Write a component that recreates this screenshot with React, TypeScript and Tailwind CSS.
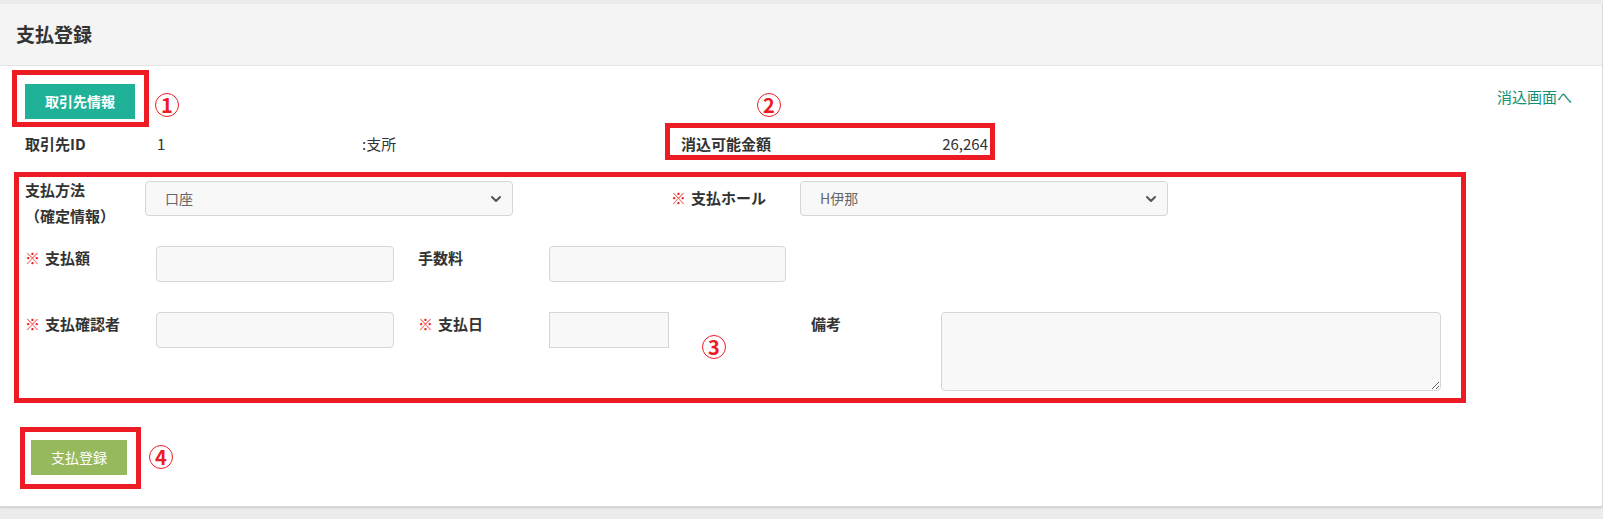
import { ChevronDown } from "lucide-react";

const font = { fontFamily: '"Noto Sans CJK JP", "Noto Sans", sans-serif' };

function Mark({ n, className }: { n: string; className: string }) {
  return (
    <span
      className={`absolute flex h-[24px] w-[24px] items-center justify-center rounded-full border border-[#ed1c24] bg-white text-[20px] font-bold leading-none text-[#ed1c24] ${className}`}
    >
      {n}
    </span>
  );
}

function Req() {
  return <span className="mr-[5px] font-normal text-[#ed1c24]">※</span>;
}

function FakeSelect({ value }: { value: string }) {
  return (
    <div className="flex h-[35px] w-[368px] items-center justify-between rounded-[4px] border border-[#d6d6d6] bg-[#f8f8f8] pl-[19px] pr-[8px] text-[14px] text-[#666]">
      <span>{value}</span>
      <ChevronDown size={16} strokeWidth={3} className="text-[#555]" />
    </div>
  );
}

export default function App() {
  return (
    <div className="relative min-h-[519px] w-full bg-[#ececec] pt-[4px] text-[#333]" style={font}>
      <div className="border-r border-b border-[#d8d8d8] bg-white shadow-[0_1px_2px_rgba(0,0,0,0.12)]">
        {/* header */}
        <div className="flex h-[62px] items-center border-b border-[#e3e3e3] bg-[#f4f4f4] pl-[16px]">
          <h1 className="text-[19px] font-bold">支払登録</h1>
        </div>

        {/* top row */}
        <div className="flex items-start justify-between pl-[25px] pr-[30px] pt-[18px]">
          <button className="h-[35px] w-[110px] bg-[#1fb299] text-[14px] font-bold text-white">
            取引先情報
          </button>
          <a className="mt-[3px] text-[15px] leading-[20px] text-[#138f72]">消込画面へ</a>
        </div>

        <div className="mt-[15px] flex pl-[25px] text-[15px] leading-[20px]">
          <span className="w-[132px] font-bold">取引先ID</span>
          <span className="w-[205px]">1</span>
          <span className="w-[319px]">:支所</span>
          <div className="flex w-[309px] justify-between">
            <span className="font-bold">消込可能金額</span>
            <span className="pr-[2px]">26,264</span>
          </div>
        </div>

        {/* form */}
        <div className="mt-[23px] flex flex-col pl-[25px] text-[15px]">
          <div className="flex items-start">
            <div className="w-[120px] font-bold leading-[26px]">
              支払方法
              <br />
              （確定情報）
            </div>
            <div className="mt-[4px]">
              <FakeSelect value="口座" />
            </div>
            <div className="w-[158px]" />
            <div className="mt-[8px] w-[129px] font-bold leading-[26px]">
              <Req />
              支払ホール
            </div>
            <div className="mt-[4px]">
              <FakeSelect value="H伊那" />
            </div>
          </div>

          <div className="mt-[17px] flex items-start">
            <div className="mt-[2px] w-[131px] font-bold leading-[20px]">
              <Req />
              支払額
            </div>
            <input className="h-[36px] w-[238px] rounded-[4px] border border-[#d6d6d6] bg-[#f8f8f8]" />
            <div className="mt-[2px] w-[155px] pl-[24px] font-bold leading-[20px]">手数料</div>
            <input className="h-[36px] w-[237px] rounded-[4px] border border-[#d6d6d6] bg-[#f8f8f8]" />
          </div>

          <div className="mt-[30px] flex items-start">
            <div className="mt-[2px] w-[131px] font-bold leading-[20px]">
              <Req />
              支払確認者
            </div>
            <input className="h-[36px] w-[238px] rounded-[4px] border border-[#d6d6d6] bg-[#f8f8f8]" />
            <div className="mt-[2px] w-[155px] pl-[24px] font-bold leading-[20px]">
              <Req />
              支払日
            </div>
            <input className="h-[36px] w-[120px] border border-[#d6d6d6] bg-[#f8f8f8]" />
            <div className="w-[142px]" />
            <div className="mt-[2px] w-[130px] font-bold leading-[20px]">備考</div>
            <textarea className="h-[79px] w-[500px] rounded-[4px] border border-[#d6d6d6] bg-[#f8f8f8]" />
          </div>
        </div>

        <div className="pb-[31px] pl-[31px] pt-[49px]">
          <button className="h-[35px] w-[96px] bg-[#97b95e] text-[14px] text-white">支払登録</button>
        </div>
      </div>

      {/* annotations */}
      <div className="absolute left-[12px] top-[70px] h-[57px] w-[137px] border-[5px] border-[#ed1c24]" />
      <div className="absolute left-[665px] top-[123px] h-[37px] w-[330px] border-[5px] border-[#ed1c24]" />
      <div className="absolute left-[14px] top-[172px] h-[231px] w-[1452px] border-[5px] border-[#ed1c24]" />
      <div className="absolute left-[20px] top-[427px] h-[62px] w-[121px] border-[5px] border-[#ed1c24]" />
      <Mark n="1" className="left-[155px] top-[93px]" />
      <Mark n="2" className="left-[757px] top-[93px]" />
      <Mark n="3" className="left-[702px] top-[335px]" />
      <Mark n="4" className="left-[149px] top-[445px]" />
    </div>
  );
}
